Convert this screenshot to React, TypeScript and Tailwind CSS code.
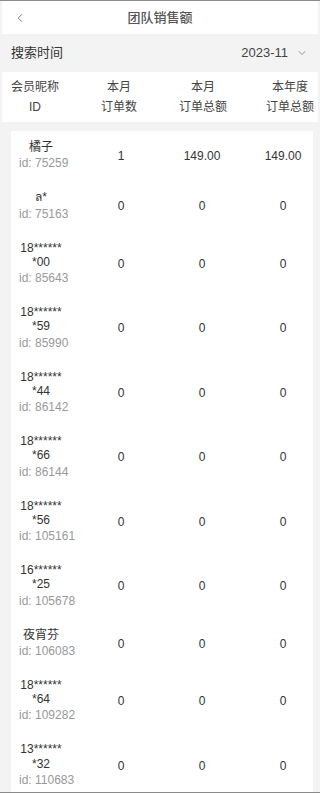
import { ChevronDown, ChevronLeft } from "lucide-react";

type Member = {
  name: string;
  id: string;
  count: string;
  month: string;
  year: string;
};

const members: Member[] = [
  { name: "橘子", id: "75259", count: "1", month: "149.00", year: "149.00" },
  { name: "ล*", id: "75163", count: "0", month: "0", year: "0" },
  { name: "18*******00", id: "85643", count: "0", month: "0", year: "0" },
  { name: "18*******59", id: "85990", count: "0", month: "0", year: "0" },
  { name: "18*******44", id: "86142", count: "0", month: "0", year: "0" },
  { name: "18*******66", id: "86144", count: "0", month: "0", year: "0" },
  { name: "18*******56", id: "105161", count: "0", month: "0", year: "0" },
  { name: "16*******25", id: "105678", count: "0", month: "0", year: "0" },
  { name: "夜宵芬", id: "106083", count: "0", month: "0", year: "0" },
  { name: "18*******64", id: "109282", count: "0", month: "0", year: "0" },
  { name: "13*******32", id: "110683", count: "0", month: "0", year: "0" },
];

export default function App() {
  return (
    <div
      className="h-[793px] w-[320px] overflow-hidden bg-[#f3f3f3] border-t border-b border-[#8a8a8a] text-[#333]"
      style={{ fontFamily: '"Liberation Sans", "Noto Sans CJK SC", sans-serif' }}
    >
      {/* Top bar */}
      <div className="mx-[2px] h-[33px] bg-white flex items-center relative">
        <ChevronLeft className="ml-[11px] w-[14px] h-[14px] text-[#666]" strokeWidth={1.5} />
        <p className="absolute left-0 right-0 text-center text-[13px] font-medium text-[#555] pointer-events-none">
          团队销售额
        </p>
      </div>

      {/* Search time */}
      <div className="h-[38px] flex items-center justify-between pl-[11px] pr-[12px]">
        <span className="text-[13px] text-[#333]">搜索时间</span>
        <div className="flex items-center gap-[8px] text-[13px] text-[#444]">
          <span>2023-11</span>
          <ChevronDown className="w-[12px] h-[12px] text-[#777]" strokeWidth={1.5} />
        </div>
      </div>

      {/* Table header */}
      <div className="mx-[2px] h-[50px] bg-white flex items-center pl-[9px] text-[12px] text-[#444] leading-[20px] whitespace-nowrap">
        <div className="text-center w-[48px]">
          <p>会员昵称</p>
          <p>ID</p>
        </div>
        <div className="text-center w-[36px] ml-[42px]">
          <p>本月</p>
          <p>订单数</p>
        </div>
        <div className="text-center w-[48px] ml-[42px]">
          <p>本月</p>
          <p>订单总额</p>
        </div>
        <div className="text-center w-[48px] ml-[39px]">
          <p>本年度</p>
          <p>订单总额</p>
        </div>
      </div>

      {/* Rows */}
      <div className="mt-[9px] mx-[11px] w-[302px] bg-white">
        {members.map((m) => (
          <div key={m.id} className="flex items-center py-[9px] text-[12px]">
            <div className="w-[69px] pl-[8px]">
              <p className="w-[44px] text-center leading-[14.25px] text-[#333] break-all">{m.name}</p>
              <p className="leading-[18px] text-[#999] whitespace-nowrap">id: {m.id}</p>
            </div>
            <div className="w-[82px] text-center text-[#333]">{m.count}</div>
            <div className="w-[80px] text-center text-[#333]">{m.month}</div>
            <div className="flex-1 pl-[11px] text-center text-[#333]">{m.year}</div>
          </div>
        ))}
      </div>
    </div>
  );
}
